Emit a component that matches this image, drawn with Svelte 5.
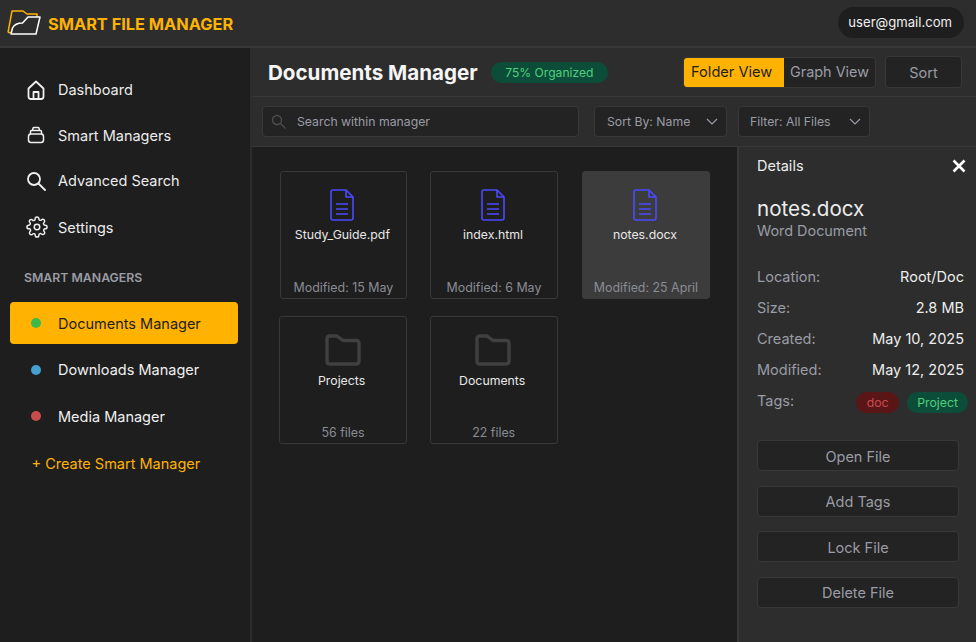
<script>
  const nav = [
    { label: 'Dashboard', icon: 'home' },
    { label: 'Smart Managers', icon: 'stack' },
    { label: 'Advanced Search', icon: 'search' },
    { label: 'Settings', icon: 'gear' }
  ];
  const managers = [
    { label: 'Documents Manager', color: '#3cb94a', active: true },
    { label: 'Downloads Manager', color: '#45a0cf' },
    { label: 'Media Manager', color: '#c94c4c' }
  ];
  const items = [
    { type: 'file', name: 'Study_Guide.pdf', meta: 'Modified: 15 May' },
    { type: 'file', name: 'index.html', meta: 'Modified: 6 May' },
    { type: 'file', name: 'notes.docx', meta: 'Modified: 25 April', selected: true },
    { type: 'folder', name: 'Projects', meta: '56 files' },
    { type: 'folder', name: 'Documents', meta: '22 files' }
  ];
  const details = [
    ['Location:', 'Root/Doc'],
    ['Size:', '2.8 MB'],
    ['Created:', 'May 10, 2025'],
    ['Modified:', 'May 12, 2025']
  ];
  const actions = ['Open File', 'Add Tags', 'Lock File', 'Delete File'];
</script>

<div class="app">
  <header class="topbar">
    <div class="brand">
      <svg class="logo" width="34" height="26" viewBox="0 0 34 26" fill="none">
        <path d="M1 22.5 L5 1 H16 L20 4 H30 V7" stroke="#ffb300" stroke-width="1.5" stroke-linejoin="round"/>
        <path d="M1 22.5 H5" stroke="#ffb300" stroke-width="1.5"/>
        <path d="M4 24 L5.5 18 Q8 13 15.5 13 L21 7 H33 L29 24 Z" fill="#2d2d2d" stroke="#fff" stroke-width="1.5" stroke-linejoin="round"/>
      </svg>
      <span class="brand-name">SMART FILE MANAGER</span>
    </div>
    <div class="user">user@gmail.com</div>
  </header>

  <div class="body">
    <aside class="sidebar">
      <nav class="nav">
        {#each nav as item}
          <div class="nav-item">
            <span class="nav-icon">
              {#if item.icon === 'home'}
                <svg width="20" height="20" viewBox="0 0 20 20" fill="none" stroke="#f0f0f0" stroke-width="1.8" stroke-linejoin="round">
                  <path d="M2.5 8.5 L10 1.5 L17.5 8.5 V16.5 Q17.5 19 15 19 H5 Q2.5 19 2.5 16.5 Z"/>
                  <path d="M7.5 19 V12 H12.5 V19"/>
                </svg>
              {:else if item.icon === 'stack'}
                <svg width="20" height="20" viewBox="0 0 20 20" fill="none" stroke="#f0f0f0" stroke-width="1.5" stroke-linejoin="round">
                  <rect x="2.5" y="9" width="15" height="8.5" rx="2.5"/>
                  <path d="M4.5 9 V6.5 Q4.5 5.5 5.5 5.5 H14.5 Q15.5 5.5 15.5 6.5 V9"/>
                  <path d="M6.5 5.5 L7 3 Q7.2 2.5 8 2.5 H12 Q12.8 2.5 13 3 L13.5 5.5"/>
                </svg>
              {:else if item.icon === 'search'}
                <svg width="20" height="20" viewBox="0 0 20 20" fill="none" stroke="#f0f0f0" stroke-width="1.8" stroke-linecap="round">
                  <circle cx="8" cy="8" r="6"/>
                  <path d="M12.5 12.5 L19 19"/>
                </svg>
              {:else}
                <svg width="22" height="22" viewBox="0 0 24 24" fill="none" stroke="#f0f0f0" stroke-width="1.6" stroke-linecap="round" stroke-linejoin="round">
                  <circle cx="12" cy="12" r="3"/>
                  <path d="M19.4 15a1.65 1.65 0 0 0 .33 1.82l.06.06a2 2 0 1 1-2.83 2.83l-.06-.06a1.65 1.65 0 0 0-2.82 1.17V21a2 2 0 1 1-4 0v-.09a1.65 1.65 0 0 0-2.82-1.17l-.06.06a2 2 0 1 1-2.83-2.83l.06-.06A1.65 1.65 0 0 0 3.09 14H3a2 2 0 1 1 0-4h.09a1.65 1.65 0 0 0 1.17-2.82l-.06-.06a2 2 0 1 1 2.83-2.83l.06.06A1.65 1.65 0 0 0 10 3.09V3a2 2 0 1 1 4 0v.09a1.65 1.65 0 0 0 2.82 1.17l.06-.06a2 2 0 1 1 2.83 2.83l-.06.06A1.65 1.65 0 0 0 20.91 10H21a2 2 0 1 1 0 4h-.09a1.65 1.65 0 0 0-1.51 1z"/>
                </svg>
              {/if}
            </span>
            <span>{item.label}</span>
          </div>
        {/each}
      </nav>

      <div class="section-label">SMART MANAGERS</div>

      <div class="managers">
        {#each managers as m}
          <div class="manager" class:active={m.active}>
            <span class="dot" style="background: {m.color}"></span>
            <span>{m.label}</span>
          </div>
        {/each}
      </div>
      <div class="create">+ Create Smart Manager</div>
    </aside>

    <main class="main">
      <div class="title-bar">
        <h1>Documents Manager</h1>
        <span class="progress">75% Organized</span>
        <div class="title-actions">
          <div class="toggle">
            <span class="toggle-btn on">Folder View</span>
            <span class="toggle-btn">Graph View</span>
          </div>
          <button class="sort">Sort</button>
        </div>
      </div>

      <div class="toolbar">
        <div class="search">
          <svg width="15" height="15" viewBox="0 0 15 15" fill="none" stroke="#4f4f4f" stroke-width="1.3" stroke-linecap="round">
            <circle cx="6" cy="6" r="4.5"/>
            <path d="M9.5 9.5 L14 14"/>
          </svg>
          <span>Search within manager</span>
        </div>
        <div class="select sel-sort">
          <span>Sort By: Name</span>
          <svg width="12" height="7" viewBox="0 0 12 7" fill="none" stroke="#9a9ca5" stroke-width="1.2"><path d="M1 1 L6 6 L11 1"/></svg>
        </div>
        <div class="select sel-filter">
          <span>Filter: All Files</span>
          <svg width="12" height="7" viewBox="0 0 12 7" fill="none" stroke="#9a9ca5" stroke-width="1.2"><path d="M1 1 L6 6 L11 1"/></svg>
        </div>
      </div>

      <div class="workspace">
        <section class="grid">
          {#each items as it}
            <article class="card {it.type}" class:selected={it.selected}>
              {#if it.type === 'file'}
                <svg class="card-icon" width="24" height="32" viewBox="0 0 24 32" fill="none" stroke="#4a4aff" stroke-width="1.6" stroke-linejoin="round">
                  <path d="M3 1 H16 L23 8 V29 Q23 31 21 31 H3 Q1 31 1 29 V3 Q1 1 3 1 Z"/>
                  <path d="M16 1 V8 H23"/>
                  <path d="M6 15 H18 M6 20 H18 M6 25 H18"/>
                </svg>
              {:else}
                <svg class="card-icon" width="36" height="32" viewBox="0 0 36 32" fill="none" stroke="#404040" stroke-width="3.4" stroke-linejoin="round">
                  <path d="M2 5 Q2 2 5 2 H12 L18 6.5 H31 Q34 6.5 34 9.5 V27 Q34 30 31 30 H5 Q2 30 2 27 Z"/>
                </svg>
              {/if}
              <div class="card-name">{it.name}</div>
              <div class="card-meta">{it.meta}</div>
            </article>
          {/each}
        </section>

        <aside class="details">
          <div class="details-head">
            <span>Details</span>
            <svg width="14" height="14" viewBox="0 0 14 14" fill="none" stroke="#fff" stroke-width="2.6"><path d="M1.5 1.5 L12.5 12.5 M12.5 1.5 L1.5 12.5"/></svg>
          </div>
          <div class="file-name">notes.docx</div>
          <div class="file-type">Word Document</div>
          <dl class="props">
            {#each details as [k, v]}
              <div class="prop"><dt>{k}</dt><dd>{v}</dd></div>
            {/each}
            <div class="prop tags-row">
              <dt>Tags:</dt>
              <dd class="tags">
                <span class="tag red">doc</span>
                <span class="tag green">Project</span>
              </dd>
            </div>
          </dl>
          <div class="actions">
            {#each actions as a}
              <button class="action">{a}</button>
            {/each}
          </div>
        </aside>
      </div>
    </main>
  </div>
</div>

<style>
  :global(body) {
    margin: 0;
    background: #1e1e1e;
  }
  .app {
    width: 976px;
    height: 642px;
    display: flex;
    flex-direction: column;
    overflow: hidden;
    font-family: Inter, "Liberation Sans", sans-serif;
    color: #f0f0f0;
    background: #1e1e1e;
  }
  .topbar {
    height: 46px;
    flex: none;
    box-sizing: content-box;
    border-bottom: 2px solid #383838;
    background: #2d2d2d;
    display: flex;
    align-items: center;
    justify-content: space-between;
    padding: 0 12px 0 7px;
  }
  .brand {
    display: flex;
    align-items: center;
    gap: 7px;
  }
  .brand-name {
    color: #ffb300;
    font-size: 16.35px;
    font-weight: 700;
    padding-top: 1px;
  }
  .user {
    background: #1e1e1e;
    border-radius: 16px;
    height: 31px;
    line-height: 31px;
    padding: 0 12px 0 10px;
    font-size: 13.1px;
    margin-top: -1px;
  }
  .body {
    flex: 1;
    display: flex;
    min-height: 0;
  }
  .sidebar {
    width: 250px;
    flex: none;
    box-sizing: content-box;
    border-right: 2px solid #2d2d2d;
    background: #1e1e1e;
  }
  .nav {
    padding-top: 19px;
    display: flex;
    flex-direction: column;
  }
  .nav-item {
    height: 45.5px;
    display: flex;
    align-items: center;
    padding-left: 26px;
    font-size: 14.5px;
    color: #ececec;
  }
  .nav-item:last-child { margin-top: 1px; }
  .nav-icon {
    width: 32px;
    display: flex;
    align-items: center;
  }
  .section-label {
    margin: 20px 0 0 24px;
    font-size: 12.3px;
    font-weight: 600;
    color: #9a9ca5;
    line-height: 16px;
  }
  .managers {
    margin-top: 16px;
    display: flex;
    flex-direction: column;
    gap: 4.5px;
    padding: 0 12px 0 10px;
  }
  .manager {
    height: 42px;
    border-radius: 4px;
    display: flex;
    align-items: center;
    padding-left: 21px;
    gap: 17px;
    font-size: 14.5px;
    color: #f0f0f0;
  }
  .manager.active {
    background: #ffb300;
    color: #1e1e1e;
  }
  .dot {
    width: 10px;
    height: 10px;
    border-radius: 50%;
  }
  .create {
    margin: 18px 0 0 31.5px;
    font-size: 14.5px;
    color: #ffb300;
    line-height: 18px;
  }
  .main {
    flex: 1;
    min-width: 0;
    display: flex;
    flex-direction: column;
  }
  .title-bar {
    height: 48px;
    flex: none;
    background: #2d2d2d;
    border-bottom: 1px solid #383838;
    display: flex;
    align-items: center;
    padding: 0 14px 0 16px;
  }
  h1 {
    margin: 0;
    font-size: 20.6px;
    font-weight: 700;
    color: #f5f5f5;
  }
  .progress {
    margin-left: 13px;
    height: 21px;
    line-height: 21px;
    border-radius: 11px;
    padding: 0 14.5px;
    background: #0b4d38;
    color: #4fd07e;
    font-size: 12.1px;
  }
  .title-actions {
    margin-left: auto;
    display: flex;
    align-items: center;
    gap: 9px;
  }
  .toggle {
    display: flex;
    height: 31px;
    background: #232323;
    border: 1px solid #383838;
    border-radius: 4px;
    overflow: hidden;
    box-sizing: border-box;
  }
  .toggle-btn {
    line-height: 28px;
    padding: 0 6px 0 6px;
    font-size: 14.4px;
    color: #9a9ca5;
  }
  .toggle-btn.on {
    box-sizing: border-box;
    width: 100px;
    background: #ffb300;
    color: #1e1e1e;
    padding: 0 0 0 7px;
    font-size: 14.6px;
  }
  .sort {
    width: 77px;
    height: 32px;
    background: #232323;
    border: 1px solid #383838;
    border-radius: 4px;
    color: #9a9ca5;
    font: 14.5px Inter, sans-serif;
  }
  .toolbar {
    height: 50px;
    flex: none;
    box-sizing: border-box;
    background: #2d2d2d;
    border-bottom: 1px solid #383838;
    display: flex;
    align-items: center;
    padding: 0 0 0 10px;
    gap: 15px;
    font-size: 12.25px;
    color: #9a9ca5;
  }
  .search {
    width: 317px;
    height: 31px;
    box-sizing: border-box;
    background: #232323;
    border: 1px solid #383838;
    border-radius: 4px;
    display: flex;
    align-items: center;
    padding-left: 8px;
    gap: 11px;
  }
  .select {
    height: 31px;
    box-sizing: border-box;
    background: #232323;
    border: 1px solid #383838;
    border-radius: 4px;
    display: flex;
    align-items: center;
    justify-content: space-between;
    padding: 0 8px 0 12px;
  }
  .sel-sort { width: 133px; }
  .sel-filter { width: 132px; margin-left: -4px; padding-left: 11px; }
  .workspace {
    flex: 1;
    display: flex;
    min-height: 0;
    background: #1e1e1e;
  }
  .grid {
    flex: 1;
    display: grid;
    grid-template-columns: 127.6px 127.6px 129.2px;
    grid-auto-rows: 128px;
    column-gap: 23px;
    row-gap: 17px;
    padding: 24px 0 0 27.6px;
    align-content: start;
  }
  .card {
    box-sizing: border-box;
    border: 1px solid #383838;
    border-radius: 3px;
    display: flex;
    flex-direction: column;
    align-items: center;
    padding-top: 17px;
  }
  .card:nth-child(3) { margin-left: 1.2px; }
  .card.folder { margin-left: -0.6px; }
  .card.selected {
    background: #3c3c3c;
    border-color: #3c3c3c;
  }
  .card-icon { flex: none; }
  .card.file .card-icon { margin-right: 2px; }
  .card.folder .card-icon { margin-right: 1px; }
  .card-name {
    margin-top: 5px;
    padding-right: 2px;
    font-size: 12.3px;
    color: #e8e8e8;
    line-height: 18px;
  }
  .card.folder .card-name { margin-top: 6px; padding-right: 3px; }
  .card-meta {
    margin-top: auto;
    margin-bottom: 1px;
    font-size: 12.4px;
    color: #8a8c95;
    line-height: 18px;
  }
  .details {
    width: 239px;
    flex: none;
    box-sizing: border-box;
    background: #2d2d2d;
    border-left: 2px solid #383838;
    padding: 0 0 0 18px;
  }
  .details-head {
    height: 37px;
    display: flex;
    align-items: center;
    justify-content: space-between;
    padding-right: 10px;
    font-size: 14.5px;
    color: #ececec;
  }
  .file-name {
    margin-top: 13px;
    font-size: 20.6px;
    line-height: 24px;
    color: #ececec;
  }
  .file-type {
    margin-top: 1px;
    font-size: 14.4px;
    line-height: 18px;
    color: #9a9ca5;
  }
  .props {
    margin: 21px 12px 0 0;
    font-size: 14.5px;
  }
  .prop {
    display: flex;
    justify-content: space-between;
    align-items: center;
    height: 31px;
  }
  dt { color: #9a9ca5; }
  dd { margin: 0; color: #ececec; }
  .tags-row {
    align-items: flex-start;
    padding-top: 7px;
    box-sizing: border-box;
  }
  .tags {
    display: flex;
    gap: 8px;
    margin-right: -4px;
    margin-top: 0;
  }
  .tag {
    height: 21px;
    line-height: 21px;
    border-radius: 11px;
    font-size: 12.3px;
    padding: 0 10px;
  }
  .tag.red { background: #5a1616; color: #c94c4c; padding: 0 10.5px; }
  .tag.green { background: #0b4d38; color: #4fd07e; }
  .actions {
    margin-top: 24px;
    display: flex;
    flex-direction: column;
    gap: 14.5px;
    padding-right: 17px;
  }
  .action {
    height: 31px;
    padding-top: 2px;
    background: #232323;
    border: 1px solid #383838;
    border-radius: 4px;
    color: #9a9ca5;
    font: 14.5px Inter, sans-serif;
  }
</style>
